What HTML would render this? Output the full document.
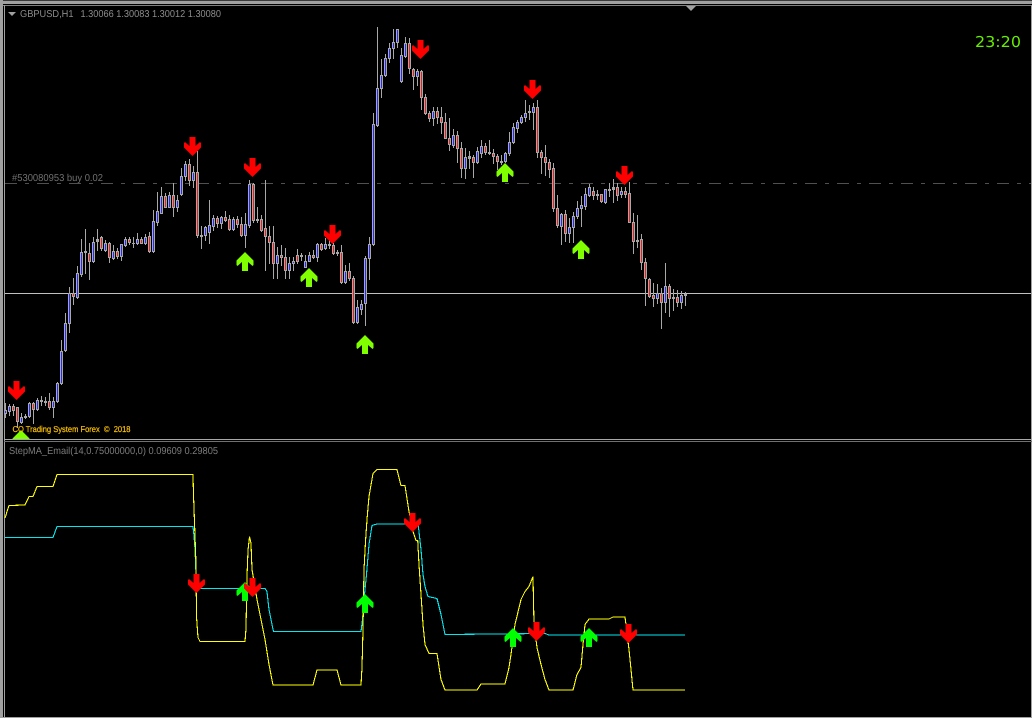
<!DOCTYPE html>
<html><head><meta charset="utf-8"><style>
html,body{margin:0;padding:0;background:#000;width:1032px;height:718px;overflow:hidden}
svg{display:block;position:absolute;left:0;top:0}
text{font-family:"Liberation Sans",sans-serif;text-rendering:geometricPrecision}
</style></head><body>
<svg id="s" width="1032" height="718" viewBox="0 0 1032 718" xmlns="http://www.w3.org/2000/svg">
<defs>
<polygon id="d" points="-3,0 3,0 3,9 7.5,5 8.5,6 8.5,10.5 0,19 -8.5,10.5 -8.5,6 -7.5,5 -3,9"/>
<polygon id="u" points="-3,19 3,19 3,10 7.5,14 8.5,13 8.5,8.5 0,0 -8.5,8.5 -8.5,13 -7.5,14 -3,10"/>
<clipPath id="top"><rect x="5" y="6" width="1026" height="433"/></clipPath>
</defs>
<rect width="1032" height="718" fill="#000"/>
<g shape-rendering="crispEdges">
<rect x="0" y="0" width="1032" height="1" fill="#3a3a3a"/>
<rect x="0" y="1" width="1032" height="3" fill="#a0a0a0"/>
<rect x="0" y="5" width="1032" height="1" fill="#808080"/>
<rect x="0" y="0" width="3" height="718" fill="#a0a0a0"/>
<rect x="4" y="5" width="1" height="713" fill="#a0a0a0"/>
<rect x="1031" y="5" width="1" height="713" fill="#a0a0a0"/>
<rect x="0" y="717" width="1032" height="1" fill="#a0a0a0"/>
<rect x="4" y="439" width="1028" height="1" fill="#a8a8a8"/>
<rect x="4" y="441" width="1028" height="1" fill="#707070"/>
<line x1="5" y1="183.5" x2="1031" y2="183.5" stroke="#505050" stroke-dasharray="12,8,4,8"/>
<rect x="5" y="293" width="1026" height="1" fill="#c0c0c0"/>
</g>
<g id="c" shape-rendering="crispEdges"></g>
<polygon points="8,12 16,12 12,16" fill="#a0a0a0"/>
<polygon points="686,6 696,6 691,11" fill="#a0a0a0"/>
<text x="20" y="17" font-size="10" fill="#8c8c8c" textLength="53.5" lengthAdjust="spacingAndGlyphs">GBPUSD,H1</text>
<text x="80.5" y="17" font-size="10" fill="#8c8c8c" textLength="140.5" lengthAdjust="spacingAndGlyphs">1.30066 1.30083 1.30012 1.30080</text>
<text x="12" y="181" font-size="10" fill="#707070" textLength="91" lengthAdjust="spacingAndGlyphs">#530080953 buy 0.02</text>
<text x="9" y="454" font-size="10" fill="#7c7c7c" textLength="209" lengthAdjust="spacingAndGlyphs">StepMA_Email(14,0.75000000,0) 0.09609 0.29805</text>
<text x="975" y="47" font-size="15" fill="#66ee00" style='font-family:"DejaVu Sans",sans-serif' textLength="46" lengthAdjust="spacingAndGlyphs">23:20</text>
<g fill="#ff0000">
<use href="#d" x="16.5" y="381"/><use href="#d" x="192.5" y="137"/><use href="#d" x="252.5" y="158"/><use href="#d" x="332.5" y="225"/><use href="#d" x="420.5" y="40"/><use href="#d" x="532.5" y="80"/><use href="#d" x="624.5" y="166"/>
</g>
<g fill="#80ff00" clip-path="url(#top)">
<use href="#u" x="245" y="252"/><use href="#u" x="309" y="268"/><use href="#u" x="365" y="335"/><use href="#u" x="505" y="163"/><use href="#u" x="581" y="240"/><use href="#u" x="21" y="430"/>
</g>
<text x="12.5" y="432" font-size="8.5" fill="#ffc400" stroke="#ffc400" stroke-width="0.2" textLength="118" lengthAdjust="spacingAndGlyphs" xml:space="preserve">CO Trading System Forex  ©  2018</text>
<g transform="translate(0,-0.5)">
<polyline fill="none" stroke="#00e8f0" shape-rendering="crispEdges" stroke-width="1.1" points="5,538 53,538 57,527 193,527 194,536 195,550 196,575 200,589 265,589 267,592 269,610 272,625 273.5,632 361,632 362.5,620 364,600 366.5,575 369,545 372,526 377,524.5 418,524.5 419,532 421,550 423,575 425,587 428,597 437,599 441,615 445,635 545,634 549,635.5 685,635.5"/>
<polyline fill="none" stroke="#ffff00" stroke-width="1.1" shape-rendering="crispEdges" points="5,518.5 9,506 25,505.5 29,497 33,497 37,487 53,487 57,475 193,475 193.5,495 195,537 196,565 196.5,617 198,638 200,642 245,642 246,629 246.5,603 247,577 248,551 249.5,537 251,544 252,570 257,600 261,620 265,640 269,665 273,685.5 313,685.5 317,670.5 337,670.5 341,685.5 361,685.5 362,668 363,630 364,570 365.5,542 367,520 369,497 373,474 377,470 397,470 401,486 405,486 409,512 413,532 416,541 417.7,541 419,565 421,595 423,625 425,645 429,654 437,654 441,680 445,690.5 477,690.5 481,684.5 505,684.5 509,668 511,655 515,625 521,600 525,592 529,587 533,577 534,625 537,648 541,665 545,680 549,690.5 573,690.5 577,675 581,668 583,645 585,625 589,619.5 609,619.5 613,617.5 625,617.5 626,625 629,650 631,670 633,690.5 685,690.5"/>
</g>
<g fill="#00ff00">
<use href="#u" x="245" y="582"/><use href="#u" x="365" y="594"/><use href="#u" x="513" y="628"/><use href="#u" x="589" y="628"/>
</g>
<g fill="#ff0000">
<use href="#d" x="196.5" y="574"/><use href="#d" x="252.5" y="578"/><use href="#d" x="412.5" y="513"/><use href="#d" x="536.5" y="622"/><use href="#d" x="628.5" y="624"/>
</g>
</svg>
<script>
var D="403,410,413,417,b;404,406,411,415,b;404,406,410,415,r;407,407,421,427,r;413,417,422,423,b;414,416,417,418,g;402,403,416,417,b;402,403,409,423,r;398,400,409,410,b;396,400,401,405,g;397,401,402,405,g;393,401,407,409,r;397,401,407,417,b;382,383,401,402,b;340,351,383,384,b;313,323,350,351,b;287,293,323,332,b;278,293,296,304,r;266,273,297,298,b;239,252,274,276,b;229,251,252,273,g;243,253,261,279,r;237,242,261,262,b;229,239,241,250,g;236,237,248,250,r;240,243,250,251,b;242,243,257,262,r;245,251,258,259,b;248,251,256,258,r;244,244,256,260,b;237,239,245,246,b;237,239,242,244,r;237,243,243,247,g;233,239,243,244,b;237,239,243,243,r;234,237,243,244,b;232,236,251,252,r;210,221,251,252,b;192,211,222,225,b;187,196,213,213,b;193,196,207,207,r;192,195,207,207,b;183,195,207,216,r;195,200,207,211,b;168,176,194,195,b;161,164,176,180,b;159,164,180,185,r;166,172,180,187,b;151,172,235,237,r;226,235,236,248,g;226,227,235,240,b;200,225,232,243,b;215,218,226,230,b;216,218,223,227,r;216,217,223,228,b;211,217,220,221,r;215,219,229,230,r;217,219,229,230,b;216,219,224,227,r;217,224,235,236,r;213,224,235,247,b;180,184,225,227,b;183,184,220,222,r;207,219,220,222,g;215,219,230,231,r;180,228,236,270,r;226,236,242,263,r;226,242,263,278,r;247,255,263,278,b;245,255,257,265,r;248,257,270,278,r;257,263,270,278,b;257,261,263,270,b;249,255,261,263,r;253,255,256,260,g;255,261,267,267,b;252,255,261,261,b;250,255,257,258,r;243,244,257,261,b;243,244,249,250,r;238,244,248,249,b;238,244,245,248,g;243,245,253,254,r;250,252,253,255,b;245,252,282,283,r;265,271,282,283,b;263,271,278,280,r;276,278,322,323,r;300,307,322,323,b;300,304,309,314,b;256,258,303,325,b;237,244,258,279,b;113,124,244,245,b;27,88,125,126,b;59,75,88,97,b;54,58,75,76,b;43,48,58,62,b;29,42,48,58,b;29,29,42,47,b;48,55,81,82,b;37,43,56,57,b;38,43,68,73,r;68,69,76,89,r;69,71,76,85,b;70,71,97,109,r;94,97,113,114,r;111,113,118,121,r;107,111,118,125,b;107,111,117,123,r;107,117,122,133,r;113,122,138,138,r;118,138,144,150,r;129,135,145,147,b;131,135,148,162,r;142,148,168,177,r;148,157,168,178,b;151,156,158,168,g;155,157,162,177,r;147,151,162,163,b;140,146,153,157,b;143,146,152,154,r;140,152,153,154,g;149,153,156,163,r;154,156,161,169,r;155,161,162,164,g;152,153,161,162,b;132,142,153,155,b;123,127,142,143,b;120,122,128,132,b;115,117,122,123,b;100,113,117,121,b;105,111,112,119,g;103,107,112,129,b;100,107,152,157,r;150,152,157,173,r;145,157,162,175,r;159,162,169,177,r;163,168,208,211,r;195,208,225,227,r;213,214,226,244,b;210,214,233,241,r;218,227,233,242,b;212,216,227,242,b;201,208,216,218,b;196,205,208,226,b;188,194,206,209,b;184,187,195,196,b;187,191,195,199,r;190,194,195,199,g;194,194,201,202,r;189,189,202,203,b;183,189,190,196,g;179,187,189,202,g;183,187,195,200,r;187,191,194,197,b;187,191,194,197,r;182,193,222,222,r;213,222,241,253,r;215,240,241,247,g;234,239,262,269,r;258,262,278,305,r;278,279,296,297,r;283,295,298,306,r;284,293,298,303,b;288,293,302,328,r;263,286,302,312,b;284,286,298,316,r;289,297,298,310,g;290,297,302,306,r;291,295,302,308,b;292,294,295,305,g";
var g=document.getElementById('c'),h='',W='#a8a8a8',C={b:'#2828ff',r:'#e82020'};
D.split(';').forEach(function(s,i){var a=s.split(','),t=+a[0],b=+a[1],e=+a[2],w=+a[3],c=a[4],x=5+4*i;
h+='<rect x="'+x+'" y="'+t+'" width="1" height="'+(w-t+1)+'" fill="'+W+'"/>';
h+='<rect x="'+(x-1)+'" y="'+b+'" width="3" height="'+(e-b+1)+'" fill="'+W+'"/>';
if(c!='g'&&e-b>=2)h+='<rect x="'+x+'" y="'+(b+1)+'" width="1" height="'+(e-b-1)+'" fill="'+C[c]+'"/>';
});
g.innerHTML=h;
</script>
</body></html>
